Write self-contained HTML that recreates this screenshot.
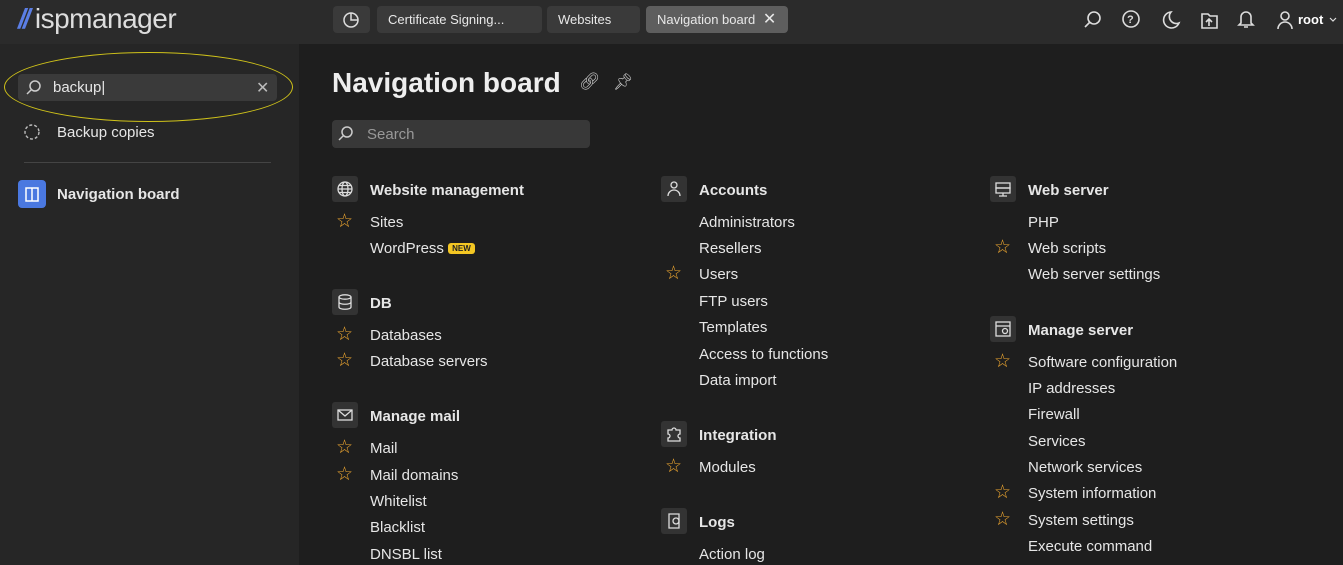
<!DOCTYPE html><html><head><style>
*{margin:0;padding:0;box-sizing:border-box}
body{width:1343px;height:565px;overflow:hidden;background:#1e1e1e;font-family:"Liberation Sans",sans-serif;color:#e6e6e6;position:relative}
.a{position:absolute;white-space:nowrap}
.hdr{left:0;top:0;width:1343px;height:44px;background:#2b2b2b}
.side{left:0;top:44px;width:299px;height:521px;background:#262626}
.tab{top:6px;height:27px;background:#3a3a3a;border-radius:4px;font-size:13px;line-height:27px;padding:0 11px;color:#e8e8e8}
.t{font-size:15px;line-height:18px;transform:translateY(-7px)}
.h{font-size:15px;font-weight:bold;line-height:18px;transform:translateY(-7px)}
.ic{width:26px;height:26px;background:#333;border-radius:3px;transform:translateY(-13px)}
.ic svg{display:block}
.st{color:#f0a830;font-size:19px;line-height:20px;transform:translateY(-9px)}
</style></head><body>
<div class="a hdr"></div>
<div class="a" style="left:18px;top:3px;font-size:28px;color:#ddd;letter-spacing:-0.5px"><span style="color:#5b7ee5;font-weight:bold;font-style:italic;letter-spacing:-3px">//</span> ispmanager</div>
<div class="a tab" style="left:333px;width:37px;padding:0"><svg width="37" height="27"><circle cx="18" cy="14" r="7" fill="none" stroke="#ddd" stroke-width="1.5"/><path d="M18 7v7h7" fill="none" stroke="#ddd" stroke-width="1.5"/></svg></div>
<div class="a tab" style="left:377px;width:165px">Certificate Signing...</div>
<div class="a tab" style="left:547px;width:93px">Websites</div>
<div class="a tab" style="left:646px;width:142px;background:#5e5e5e">Navigation board <span style="font-size:16px;margin-left:4px">✕</span></div>
<svg class="a" style="left:1080px;top:8px" width="263" height="24" fill="none" stroke="#ddd" stroke-width="1.6"><circle cx="14" cy="10" r="6"/><path d="M10 14l-5 5"/><circle cx="51" cy="11" r="8"/><text x="47" y="15" fill="#ddd" stroke="none" font-size="11" font-weight="bold">?</text><path d="M91 4a8 8 0 1 0 8 11a7 7 0 0 1 -8 -11z"/><path d="M122 6h6l2 2h7v12h-15z"/><path d="M129 18v-7m-3 3l3-3l3 3"/><path d="M166 4a5 5 0 0 1 5 5v6l2 2h-14l2-2v-6a5 5 0 0 1 5-5zM164 19h4"/><circle cx="205" cy="8" r="4"/><path d="M198 21a7 7 0 0 1 14 0"/><text x="218" y="16" fill="#fff" stroke="none" font-size="13" font-weight="bold">root</text><path d="M250 10l3 3l3-3" stroke-width="1.2"/></svg>
<div class="a side"></div>
<div class="a" style="left:4px;top:52px;width:289px;height:70px;border:1.5px solid #cfc21a;border-radius:50%"></div>
<div class="a" style="left:18px;top:74px;width:259px;height:27px;background:#3a3a3a;border-radius:4px"></div>
<svg class="a" style="left:24px;top:78px" width="20" height="20" fill="none" stroke="#ccc" stroke-width="1.5"><circle cx="11" cy="8" r="5"/><path d="M7 12l-4 4"/></svg>
<div class="a" style="left:53px;top:79px;font-size:15px">backup|</div>
<div class="a" style="left:256px;top:78px;font-size:16px;color:#bbb">✕</div>
<svg class="a" style="left:23px;top:123px" width="18" height="18" fill="none" stroke="#bbb" stroke-width="1.4" stroke-dasharray="3 2"><circle cx="9" cy="9" r="7"/></svg>
<div class="a" style="left:57px;top:124px;font-size:15px">Backup copies</div>
<div class="a" style="left:24px;top:162px;width:247px;height:1px;background:#444"></div>
<div class="a" style="left:18px;top:180px;width:28px;height:28px;background:#4a78e0;border-radius:4px"></div>
<svg class="a" style="left:18px;top:180px" width="28" height="28" fill="none" stroke="#fff" stroke-width="1.5"><path d="M8 8h12v13h-12zM14 8v13"/></svg>
<div class="a" style="left:57px;top:186px;font-size:15px;font-weight:bold">Navigation board</div>
<div class="a" style="left:332px;top:67px;font-size:28px;font-weight:bold;color:#eee">Navigation board</div>
<div class="a" style="left:579px;top:72px;font-size:17px;color:#ccc">🔗︎</div>
<div class="a" style="left:613px;top:72px;font-size:16px;color:#ccc">📌︎</div>
<div class="a" style="left:332px;top:120px;width:258px;height:28px;background:#383838;border-radius:4px"></div>
<svg class="a" style="left:336px;top:124px" width="20" height="20" fill="none" stroke="#ccc" stroke-width="1.5"><circle cx="11" cy="8" r="5"/><path d="M7 12l-4 4"/></svg>
<div class="a" style="left:367px;top:126px;font-size:15px;color:#999">Search</div>

<div class="a ic" style="left:332px;top:189px"><svg width="26" height="26" fill="none" stroke="#ddd" stroke-width="1.3"><circle cx="13" cy="13" r="7"/><ellipse cx="13" cy="13" rx="3" ry="7"/><path d="M6 13h14M7 9.5h12M7 16.5h12"/></svg></div><div class="a h" style="left:370px;top:189px">Website management</div>
<div class="a st" style="left:336px;top:221px">☆</div><div class="a t" style="left:370px;top:221px">Sites</div>
<div class="a t" style="left:370px;top:247px">WordPress <span style="background:#f3c623;color:#222;font-size:8px;font-weight:bold;padding:1px 4px;border-radius:3px;vertical-align:2px">NEW</span></div>
<div class="a ic" style="left:332px;top:302px"><svg width="26" height="26" fill="none" stroke="#ddd" stroke-width="1.3"><ellipse cx="13" cy="8" rx="6" ry="2.2"/><path d="M7 8v10c0 3 12 3 12 0v-10M7 13c0 3 12 3 12 0"/></svg></div><div class="a h" style="left:370px;top:302px">DB</div>
<div class="a st" style="left:336px;top:334px">☆</div><div class="a t" style="left:370px;top:334px">Databases</div>
<div class="a st" style="left:336px;top:360px">☆</div><div class="a t" style="left:370px;top:360px">Database servers</div>
<div class="a ic" style="left:332px;top:415px"><svg width="26" height="26" fill="none" stroke="#ddd" stroke-width="1.3"><rect x="6" y="8" width="14" height="10"/><path d="M6 8l7 6l7-6"/></svg></div><div class="a h" style="left:370px;top:415px">Manage mail</div>
<div class="a st" style="left:336px;top:447px">☆</div><div class="a t" style="left:370px;top:447px">Mail</div>
<div class="a st" style="left:336px;top:474px">☆</div><div class="a t" style="left:370px;top:474px">Mail domains</div>
<div class="a t" style="left:370px;top:500px">Whitelist</div>
<div class="a t" style="left:370px;top:526px">Blacklist</div>
<div class="a t" style="left:370px;top:553px">DNSBL list</div>

<div class="a ic" style="left:661px;top:189px"><svg width="26" height="26" fill="none" stroke="#ddd" stroke-width="1.3"><circle cx="13" cy="9" r="3"/><path d="M7 20a6 6 0 0 1 12 0"/></svg></div><div class="a h" style="left:699px;top:189px">Accounts</div>
<div class="a t" style="left:699px;top:221px">Administrators</div>
<div class="a t" style="left:699px;top:247px">Resellers</div>
<div class="a st" style="left:665px;top:273px">☆</div><div class="a t" style="left:699px;top:273px">Users</div>
<div class="a t" style="left:699px;top:300px">FTP users</div>
<div class="a t" style="left:699px;top:326px">Templates</div>
<div class="a t" style="left:699px;top:353px">Access to functions</div>
<div class="a t" style="left:699px;top:379px">Data import</div>
<div class="a ic" style="left:661px;top:434px"><svg width="26" height="26" fill="none" stroke="#ddd" stroke-width="1.3"><path d="M7 9h4a2 2 0 0 1 4 0h4v4a2 2 0 0 0 0 4v3h-12v-3a2 2 0 0 0 0-4z"/></svg></div><div class="a h" style="left:699px;top:434px">Integration</div>
<div class="a st" style="left:665px;top:466px">☆</div><div class="a t" style="left:699px;top:466px">Modules</div>
<div class="a ic" style="left:661px;top:521px"><svg width="26" height="26" fill="none" stroke="#ddd" stroke-width="1.3"><path d="M8 6h10v14h-10z"/><circle cx="15" cy="13" r="3"/></svg></div><div class="a h" style="left:699px;top:521px">Logs</div>
<div class="a t" style="left:699px;top:553px">Action log</div>

<div class="a ic" style="left:990px;top:189px"><svg width="26" height="26" fill="none" stroke="#ddd" stroke-width="1.3"><rect x="6" y="7" width="14" height="5"/><rect x="6" y="12" width="14" height="5"/><path d="M13 17v3M9 20h8"/></svg></div><div class="a h" style="left:1028px;top:189px">Web server</div>
<div class="a t" style="left:1028px;top:221px">PHP</div>
<div class="a st" style="left:994px;top:247px">☆</div><div class="a t" style="left:1028px;top:247px">Web scripts</div>
<div class="a t" style="left:1028px;top:273px">Web server settings</div>
<div class="a ic" style="left:990px;top:329px"><svg width="26" height="26" fill="none" stroke="#ddd" stroke-width="1.3"><rect x="6" y="6" width="14" height="14"/><path d="M6 10h14"/><circle cx="15" cy="15" r="2.5"/></svg></div><div class="a h" style="left:1028px;top:329px">Manage server</div>
<div class="a st" style="left:994px;top:361px">☆</div><div class="a t" style="left:1028px;top:361px">Software configuration</div>
<div class="a t" style="left:1028px;top:387px">IP addresses</div>
<div class="a t" style="left:1028px;top:413px">Firewall</div>
<div class="a t" style="left:1028px;top:440px">Services</div>
<div class="a t" style="left:1028px;top:466px">Network services</div>
<div class="a st" style="left:994px;top:492px">☆</div><div class="a t" style="left:1028px;top:492px">System information</div>
<div class="a st" style="left:994px;top:519px">☆</div><div class="a t" style="left:1028px;top:519px">System settings</div>
<div class="a t" style="left:1028px;top:545px">Execute command</div>
</body></html>
